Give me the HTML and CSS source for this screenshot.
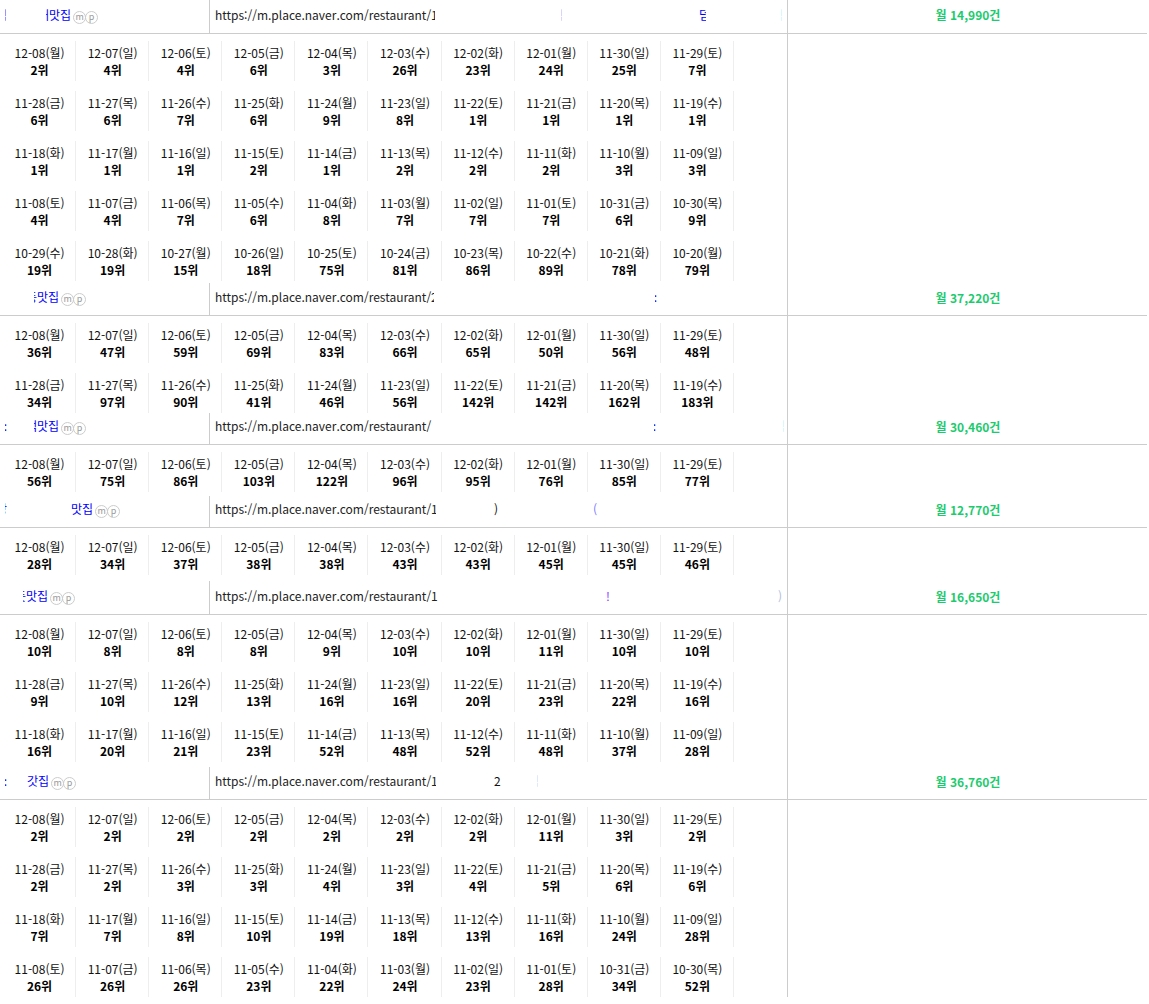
FILE: index.html
```html
<!DOCTYPE html>
<html lang="ko">
<head>
<meta charset="utf-8">
<title>플레이스 순위</title>
<link rel="stylesheet" href="styles.css">
</head>
<body>
<main class="list">

<section class="entry">
<header class="head h1">
<div class="name"><span class="bit lead tint-v">점</span><a class="title t1"><span class="bit">대</span>맛집</a><span class="badge">m</span><span class="badge">p</span></div>
<div class="url"><span class="link w1">https://m.place.naver.com/restaurant/1</span><span class="bit tint-p u1a">점</span><span class="clip blue u1b">덤</span><span class="bit tint-g u1c">점</span></div>
<div class="count">월 14,990건</div>
</header>
<div class="days">
<div class="day">12-08(월)<b>2위</b></div><div class="day">12-07(일)<b>4위</b></div><div class="day">12-06(토)<b>4위</b></div><div class="day">12-05(금)<b>6위</b></div><div class="day">12-04(목)<b>3위</b></div><div class="day">12-03(수)<b>26위</b></div><div class="day">12-02(화)<b>23위</b></div><div class="day">12-01(월)<b>24위</b></div><div class="day">11-30(일)<b>25위</b></div><div class="day">11-29(토)<b>7위</b></div>
<div class="day">11-28(금)<b>6위</b></div><div class="day">11-27(목)<b>6위</b></div><div class="day">11-26(수)<b>7위</b></div><div class="day">11-25(화)<b>6위</b></div><div class="day">11-24(월)<b>9위</b></div><div class="day">11-23(일)<b>8위</b></div><div class="day">11-22(토)<b>1위</b></div><div class="day">11-21(금)<b>1위</b></div><div class="day">11-20(목)<b>1위</b></div><div class="day">11-19(수)<b>1위</b></div>
<div class="day">11-18(화)<b>1위</b></div><div class="day">11-17(월)<b>1위</b></div><div class="day">11-16(일)<b>1위</b></div><div class="day">11-15(토)<b>2위</b></div><div class="day">11-14(금)<b>1위</b></div><div class="day">11-13(목)<b>2위</b></div><div class="day">11-12(수)<b>2위</b></div><div class="day">11-11(화)<b>2위</b></div><div class="day">11-10(월)<b>3위</b></div><div class="day">11-09(일)<b>3위</b></div>
<div class="day">11-08(토)<b>4위</b></div><div class="day">11-07(금)<b>4위</b></div><div class="day">11-06(목)<b>7위</b></div><div class="day">11-05(수)<b>6위</b></div><div class="day">11-04(화)<b>8위</b></div><div class="day">11-03(월)<b>7위</b></div><div class="day">11-02(일)<b>7위</b></div><div class="day">11-01(토)<b>7위</b></div><div class="day">10-31(금)<b>6위</b></div><div class="day">10-30(목)<b>9위</b></div>
<div class="day">10-29(수)<b>19위</b></div><div class="day">10-28(화)<b>19위</b></div><div class="day">10-27(월)<b>15위</b></div><div class="day">10-26(일)<b>18위</b></div><div class="day">10-25(토)<b>75위</b></div><div class="day">10-24(금)<b>81위</b></div><div class="day">10-23(목)<b>86위</b></div><div class="day">10-22(수)<b>89위</b></div><div class="day">10-21(화)<b>78위</b></div><div class="day">10-20(월)<b>79위</b></div>
</div>
</section>

<section class="entry">
<header class="head h2">
<div class="name"><a class="title t2"><span class="bit">등</span>맛집</a><span class="badge">m</span><span class="badge">p</span></div>
<div class="url"><span class="link w2">https://m.place.naver.com/restaurant/2</span><span class="blue u2a bit">:</span></div>
<div class="count">월 37,220건</div>
</header>
<div class="days">
<div class="day">12-08(월)<b>36위</b></div><div class="day">12-07(일)<b>47위</b></div><div class="day">12-06(토)<b>59위</b></div><div class="day">12-05(금)<b>69위</b></div><div class="day">12-04(목)<b>83위</b></div><div class="day">12-03(수)<b>66위</b></div><div class="day">12-02(화)<b>65위</b></div><div class="day">12-01(월)<b>50위</b></div><div class="day">11-30(일)<b>56위</b></div><div class="day">11-29(토)<b>48위</b></div>
<div class="day">11-28(금)<b>34위</b></div><div class="day">11-27(목)<b>97위</b></div><div class="day">11-26(수)<b>90위</b></div><div class="day">11-25(화)<b>41위</b></div><div class="day">11-24(월)<b>46위</b></div><div class="day">11-23(일)<b>56위</b></div><div class="day">11-22(토)<b>142위</b></div><div class="day">11-21(금)<b>142위</b></div><div class="day">11-20(목)<b>162위</b></div><div class="day">11-19(수)<b>183위</b></div>
</div>
</section>

<section class="entry">
<header class="head h3">
<div class="name"><span class="bit lead blue">:</span><a class="title t3"><span class="bit">색</span>맛집</a><span class="badge">m</span><span class="badge">p</span></div>
<div class="url"><span class="link w3">https://m.place.naver.com/restaurant/</span><span class="blue u3a bit">:</span><span class="bit tint-g u3b">점</span></div>
<div class="count">월 30,460건</div>
</header>
<div class="days">
<div class="day">12-08(월)<b>56위</b></div><div class="day">12-07(일)<b>75위</b></div><div class="day">12-06(토)<b>86위</b></div><div class="day">12-05(금)<b>103위</b></div><div class="day">12-04(목)<b>122위</b></div><div class="day">12-03(수)<b>96위</b></div><div class="day">12-02(화)<b>95위</b></div><div class="day">12-01(월)<b>76위</b></div><div class="day">11-30(일)<b>85위</b></div><div class="day">11-29(토)<b>77위</b></div>
</div>
</section>

<section class="entry">
<header class="head h4">
<div class="name"><span class="bit lead blue">강</span><a class="title t4">맛집</a><span class="badge">m</span><span class="badge">p</span></div>
<div class="url"><span class="link w4">https://m.place.naver.com/restaurant/1</span><span class="u4a">)</span><span class="blue tint-b u4b">(</span></div>
<div class="count">월 12,770건</div>
</header>
<div class="days">
<div class="day">12-08(월)<b>28위</b></div><div class="day">12-07(일)<b>34위</b></div><div class="day">12-06(토)<b>37위</b></div><div class="day">12-05(금)<b>38위</b></div><div class="day">12-04(목)<b>38위</b></div><div class="day">12-03(수)<b>43위</b></div><div class="day">12-02(화)<b>43위</b></div><div class="day">12-01(월)<b>45위</b></div><div class="day">11-30(일)<b>45위</b></div><div class="day">11-29(토)<b>46위</b></div>
</div>
</section>

<section class="entry">
<header class="head h5">
<div class="name"><a class="title t5"><span class="bit">듯</span>맛집</a><span class="badge">m</span><span class="badge">p</span></div>
<div class="url"><span class="link w5">https://m.place.naver.com/restaurant/1</span><span class="tint-v u5a">!</span><span class="tint-s u5b">)</span></div>
<div class="count">월 16,650건</div>
</header>
<div class="days">
<div class="day">12-08(월)<b>10위</b></div><div class="day">12-07(일)<b>8위</b></div><div class="day">12-06(토)<b>8위</b></div><div class="day">12-05(금)<b>8위</b></div><div class="day">12-04(목)<b>9위</b></div><div class="day">12-03(수)<b>10위</b></div><div class="day">12-02(화)<b>10위</b></div><div class="day">12-01(월)<b>11위</b></div><div class="day">11-30(일)<b>10위</b></div><div class="day">11-29(토)<b>10위</b></div>
<div class="day">11-28(금)<b>9위</b></div><div class="day">11-27(목)<b>10위</b></div><div class="day">11-26(수)<b>12위</b></div><div class="day">11-25(화)<b>13위</b></div><div class="day">11-24(월)<b>16위</b></div><div class="day">11-23(일)<b>16위</b></div><div class="day">11-22(토)<b>20위</b></div><div class="day">11-21(금)<b>23위</b></div><div class="day">11-20(목)<b>22위</b></div><div class="day">11-19(수)<b>16위</b></div>
<div class="day">11-18(화)<b>16위</b></div><div class="day">11-17(월)<b>20위</b></div><div class="day">11-16(일)<b>21위</b></div><div class="day">11-15(토)<b>23위</b></div><div class="day">11-14(금)<b>52위</b></div><div class="day">11-13(목)<b>48위</b></div><div class="day">11-12(수)<b>52위</b></div><div class="day">11-11(화)<b>48위</b></div><div class="day">11-10(월)<b>37위</b></div><div class="day">11-09(일)<b>28위</b></div>
</div>
</section>

<section class="entry">
<header class="head h6">
<div class="name"><span class="bit lead blue">:</span><a class="title t6">갓집</a><span class="badge">m</span><span class="badge">p</span></div>
<div class="url"><span class="link w6">https://m.place.naver.com/restaurant/1</span><span class="u6a">2</span><span class="bit tint-p u6b">점</span></div>
<div class="count">월 36,760건</div>
</header>
<div class="days">
<div class="day">12-08(월)<b>2위</b></div><div class="day">12-07(일)<b>2위</b></div><div class="day">12-06(토)<b>2위</b></div><div class="day">12-05(금)<b>2위</b></div><div class="day">12-04(목)<b>2위</b></div><div class="day">12-03(수)<b>2위</b></div><div class="day">12-02(화)<b>2위</b></div><div class="day">12-01(월)<b>11위</b></div><div class="day">11-30(일)<b>3위</b></div><div class="day">11-29(토)<b>2위</b></div>
<div class="day">11-28(금)<b>2위</b></div><div class="day">11-27(목)<b>2위</b></div><div class="day">11-26(수)<b>3위</b></div><div class="day">11-25(화)<b>3위</b></div><div class="day">11-24(월)<b>4위</b></div><div class="day">11-23(일)<b>3위</b></div><div class="day">11-22(토)<b>4위</b></div><div class="day">11-21(금)<b>5위</b></div><div class="day">11-20(목)<b>6위</b></div><div class="day">11-19(수)<b>6위</b></div>
<div class="day">11-18(화)<b>7위</b></div><div class="day">11-17(월)<b>7위</b></div><div class="day">11-16(일)<b>8위</b></div><div class="day">11-15(토)<b>10위</b></div><div class="day">11-14(금)<b>19위</b></div><div class="day">11-13(목)<b>18위</b></div><div class="day">11-12(수)<b>13위</b></div><div class="day">11-11(화)<b>16위</b></div><div class="day">11-10(월)<b>24위</b></div><div class="day">11-09(일)<b>28위</b></div>
<div class="day">11-08(토)<b>26위</b></div><div class="day">11-07(금)<b>26위</b></div><div class="day">11-06(목)<b>26위</b></div><div class="day">11-05(수)<b>23위</b></div><div class="day">11-04(화)<b>22위</b></div><div class="day">11-03(월)<b>24위</b></div><div class="day">11-02(일)<b>23위</b></div><div class="day">11-01(토)<b>28위</b></div><div class="day">10-31(금)<b>34위</b></div><div class="day">10-30(목)<b>52위</b></div>
</div>
</section>

</main>
</body>
</html>
```
FILE: styles.css
```css
* { box-sizing: border-box; }
html, body { margin: 0; padding: 0; background: #fff; }
body {
  font-family: "Noto Sans CJK KR", "Noto Sans", sans-serif;
  font-size: 12px;
  color: #111;
  overflow: hidden;
  height: 1004px;
}
.list { width: 1147px; }

/* header row */
.head {
  display: flex;
  align-items: stretch;
  border-bottom: 1px solid #ccc;
}
.h1 { height: 34px; }
.h2 { height: 35px; }
.h3 { height: 32px; }
.h4 { height: 36px; }
.h5 { height: 40px; }
.h6 { height: 38px; }
.h2 .name, .h2 .url { margin-top: 2px; }
.h4 .name, .h4 .url { margin-top: 4px; }
.h5 .name, .h5 .url { margin-top: 6px; }
.h6 .name, .h6 .url { margin-top: 5px; }

.name {
  width: 210px;
  flex: none;
  border-right: 1px solid #ccc;
  display: flex;
  align-items: flex-end;
  padding: 0 0 10px 5px;
  white-space: nowrap;
}
.title { color: #00f; display: flex; align-items: center; }
.title .bit { width: 3px; }
.t1 { margin-left: 39px; }
.t2 { margin-left: 29px; }
.t3 { margin-left: 27px; }
.t4 { margin-left: 64px; }
.t5 { margin-left: 18px; }
.t6 { margin-left: 20px; }
.badge {
  width: 13px;
  height: 13px;
  border: 1px solid #ccc;
  border-radius: 50%;
  color: #999;
  font-size: 9px;
  line-height: 10px;
  text-align: center;
  margin-bottom: -1px;
}
.title + .badge { margin-left: 2px; }
.badge + .badge { margin-left: -1px; }

.bit {
  display: inline-block;
  width: 2px;
  overflow: hidden;
  direction: rtl;
  flex: none;
}
.clip { display: inline-block; width: 7px; overflow: hidden; flex: none; }
.lead { color: #00f; }
.blue { color: #00f; }
.tint-p { color: #d3b6ec; }
.tint-g { color: #d5f3ec; }
.tint-b { color: #7a7aff; }
.tint-v { color: #8a3cff; }
.tint-s { color: #b4bcd8; }

.url {
  width: 577px;
  flex: none;
  display: flex;
  align-items: flex-end;
  padding: 0 0 10px 5px;
  white-space: nowrap;
}
.link { overflow: hidden; flex: none; color: #222; }
.w1 { width: 220px; }
.w2 { width: 219px; }
.w3 { width: 217px; }
.w4 { width: 221px; }
.w5 { width: 223px; }
.w6 { width: 221px; }
.u1a { margin-left: 126px; }
.u1b { margin-left: 136px; }
.u1c { margin-left: 75px; }
.u2a { margin-left: 221px; }
.u3a { margin-left: 222px; }
.u3b { margin-left: 127px; }
.u4a { margin-left: 58px; }
.u4b { margin-left: 95px; }
.u5a { margin-left: 168px; }
.u5b { margin-left: 168px; }
.u6a { margin-left: 58px; }
.u6b { margin-left: 36px; }

.count {
  flex: 1;
  border-left: 1px solid #ccc;
  display: flex;
  align-items: flex-end;
  justify-content: center;
  padding: 0 0 9px 1px;
  color: #1ccb6e;
  font-weight: 700;
}
.h1 .count { padding-bottom: 10px; }

/* day grid */
.days {
  width: 788px;
  border-right: 1px solid #ccc;
  display: grid;
  grid-template-columns: repeat(10, 73.1px);
  row-gap: 10px;
  padding: 7px 0 0 3px;
}
.day {
  height: 40px;
  border-right: 1px solid #eee;
  text-align: center;
  line-height: 17px;
  padding: 3px 0 0 1px;
}
.day b { display: block; font-weight: 700; color: #000; }
```
